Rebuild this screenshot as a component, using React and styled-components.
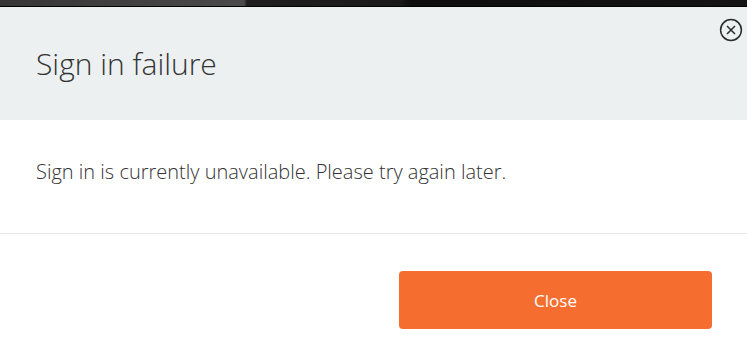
import React from "react";
import styled, { createGlobalStyle } from "styled-components";

const GlobalStyle = createGlobalStyle`
  html, body {
    margin: 0;
    padding: 0;
    background: #fff;
  }
  body {
    font-family: "Open Sans", "Liberation Sans", sans-serif;
    width: 747px;
    height: 342px;
    overflow: hidden;
  }
`;

const Page = styled.div`
  display: flex;
  flex-direction: column;
  width: 747px;
  height: 342px;
  background: #fff;
`;

const Backdrop = styled.div`
  height: 6px;
  flex-shrink: 0;
  background: linear-gradient(90deg, #363636 0, #4a4a4a 244px, #1f1f1f 247px, #1a1a1a 400px, #0e0e0e 410px, #141414 100%);
  border-bottom: 1px solid #000;
`;

const Modal = styled.div`
  display: flex;
  flex-direction: column;
  flex: 1;
  background: #fff;
`;

const Header = styled.div`
  position: relative;
  height: 113px;
  background: #ecf0f1;
  display: flex;
  align-items: center;
  padding: 0 37px;
  box-sizing: border-box;
`;

const Title = styled.h2`
  margin: 0 0 0 -1px;
  font-size: 30px;
  font-weight: 300;
  color: #333;
`;

const CloseIcon = styled.button`
  position: absolute;
  top: 11px;
  right: 4px;
  width: 24px;
  height: 24px;
  padding: 0;
  border: none;
  background: none;
  cursor: pointer;
  color: #2b2b2b;
`;

const Body = styled.div`
  height: 114px;
  display: flex;
  align-items: center;
  padding: 0 36px 10px;
  box-sizing: border-box;
  border-bottom: 1px solid #e8e8e8;
`;

const Message = styled.p`
  margin: 0;
  font-size: 20px;
  font-weight: 300;
  color: #333;
`;

const Footer = styled.div`
  display: flex;
  justify-content: flex-end;
  padding: 37px 35px 0;
`;

const CloseButton = styled.button`
  width: 313px;
  height: 58px;
  border: none;
  border-radius: 4px;
  background: #f56e2f;
  color: #fff;
  font-family: "Open Sans", "Liberation Sans", sans-serif;
  font-size: 17px;
  font-weight: 400;
  cursor: pointer;
`;

export default function App() {
  return (
    <>
      <GlobalStyle />
      <Page>
        <Backdrop />
        <Modal>
          <Header>
            <Title>Sign in failure</Title>
            <CloseIcon aria-label="Close">
              <svg width="24" height="24" viewBox="0 0 24 24" fill="none" stroke="currentColor" strokeWidth="1.5">
                <circle cx="12" cy="12" r="10.4" />
                <path d="M8 8l8 8M16 8l-8 8" />
              </svg>
            </CloseIcon>
          </Header>
          <Body>
            <Message>Sign in is currently unavailable. Please try again later.</Message>
          </Body>
          <Footer>
            <CloseButton>Close</CloseButton>
          </Footer>
        </Modal>
      </Page>
    </>
  );
}
